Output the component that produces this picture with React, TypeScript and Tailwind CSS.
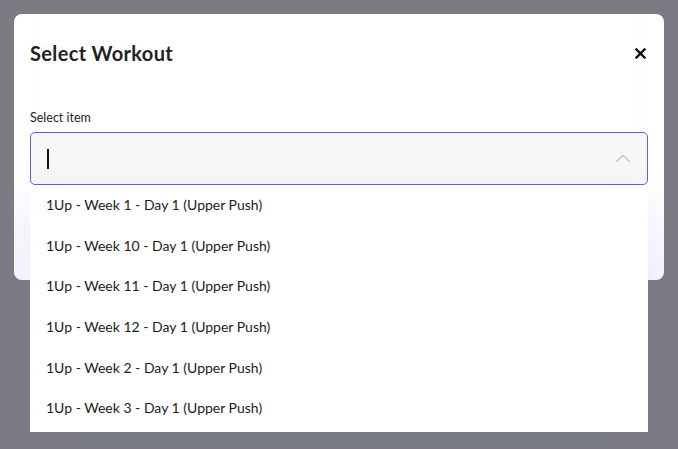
import React from 'react';

const WORKOUTS = [
  '1Up - Week 1 - Day 1 (Upper Push)',
  '1Up - Week 10 - Day 1 (Upper Push)',
  '1Up - Week 11 - Day 1 (Upper Push)',
  '1Up - Week 12 - Day 1 (Upper Push)',
  '1Up - Week 2 - Day 1 (Upper Push)',
  '1Up - Week 3 - Day 1 (Upper Push)',
];

export default function App() {
  return (
    <div className="h-[449px] w-full overflow-hidden bg-[#7b7c83] p-[14px] font-['Lato',sans-serif]">
      <div className="relative h-[266px] w-[650px] rounded-lg bg-white shadow-[inset_0_-90px_60px_-40px_rgba(225,229,250,0.35)]">
        {/* header */}
        <div className="flex items-center justify-between px-4 pt-[28px]">
          <h2 className="text-[20px] font-bold leading-[22px] tracking-[0.35px] text-[#222226]">Select Workout</h2>
          <button className="mr-[2px] flex h-[12px] w-[12px] items-center justify-center">
            <svg width="11" height="11" viewBox="0 0 11 11">
              <path d="M1.5 1.5 L9.5 9.5 M9.5 1.5 L1.5 9.5" stroke="#111" strokeWidth="2.4" strokeLinecap="square" />
            </svg>
          </button>
        </div>

        {/* field */}
        <div className="px-4 pt-[47px]">
          <label className="block text-[12.5px] leading-[14px] text-[#222226]">Select item</label>
          <div className="relative mt-[7px]">
            <div className="flex h-[53px] w-[618px] items-center justify-between rounded-[5px] border border-[#5a5ff0] bg-[#f7f7f8] pl-[16px] pr-[16px]">
              <span className="block h-[20px] w-[1.5px] bg-[#111]" />
              <svg width="16" height="9" viewBox="0 0 16 9">
                <path d="M1 8 L8 1.5 L15 8" fill="none" stroke="#c4c4c8" strokeWidth="1.3" />
              </svg>
            </div>

            {/* dropdown menu */}
            <ul className="absolute left-0 top-[53px] z-10 h-[247px] w-[618px] overflow-hidden bg-white shadow-[0_10px_30px_rgba(90,100,220,0.08)]">
              {WORKOUTS.map((w) => (
                <li
                  key={w}
                  className="flex h-[40.6px] items-center px-4 text-[14px] leading-[18px] text-[#1c1c20]"
                >
                  {w}
                </li>
              ))}
            </ul>
          </div>
        </div>
      </div>
    </div>
  );
}
